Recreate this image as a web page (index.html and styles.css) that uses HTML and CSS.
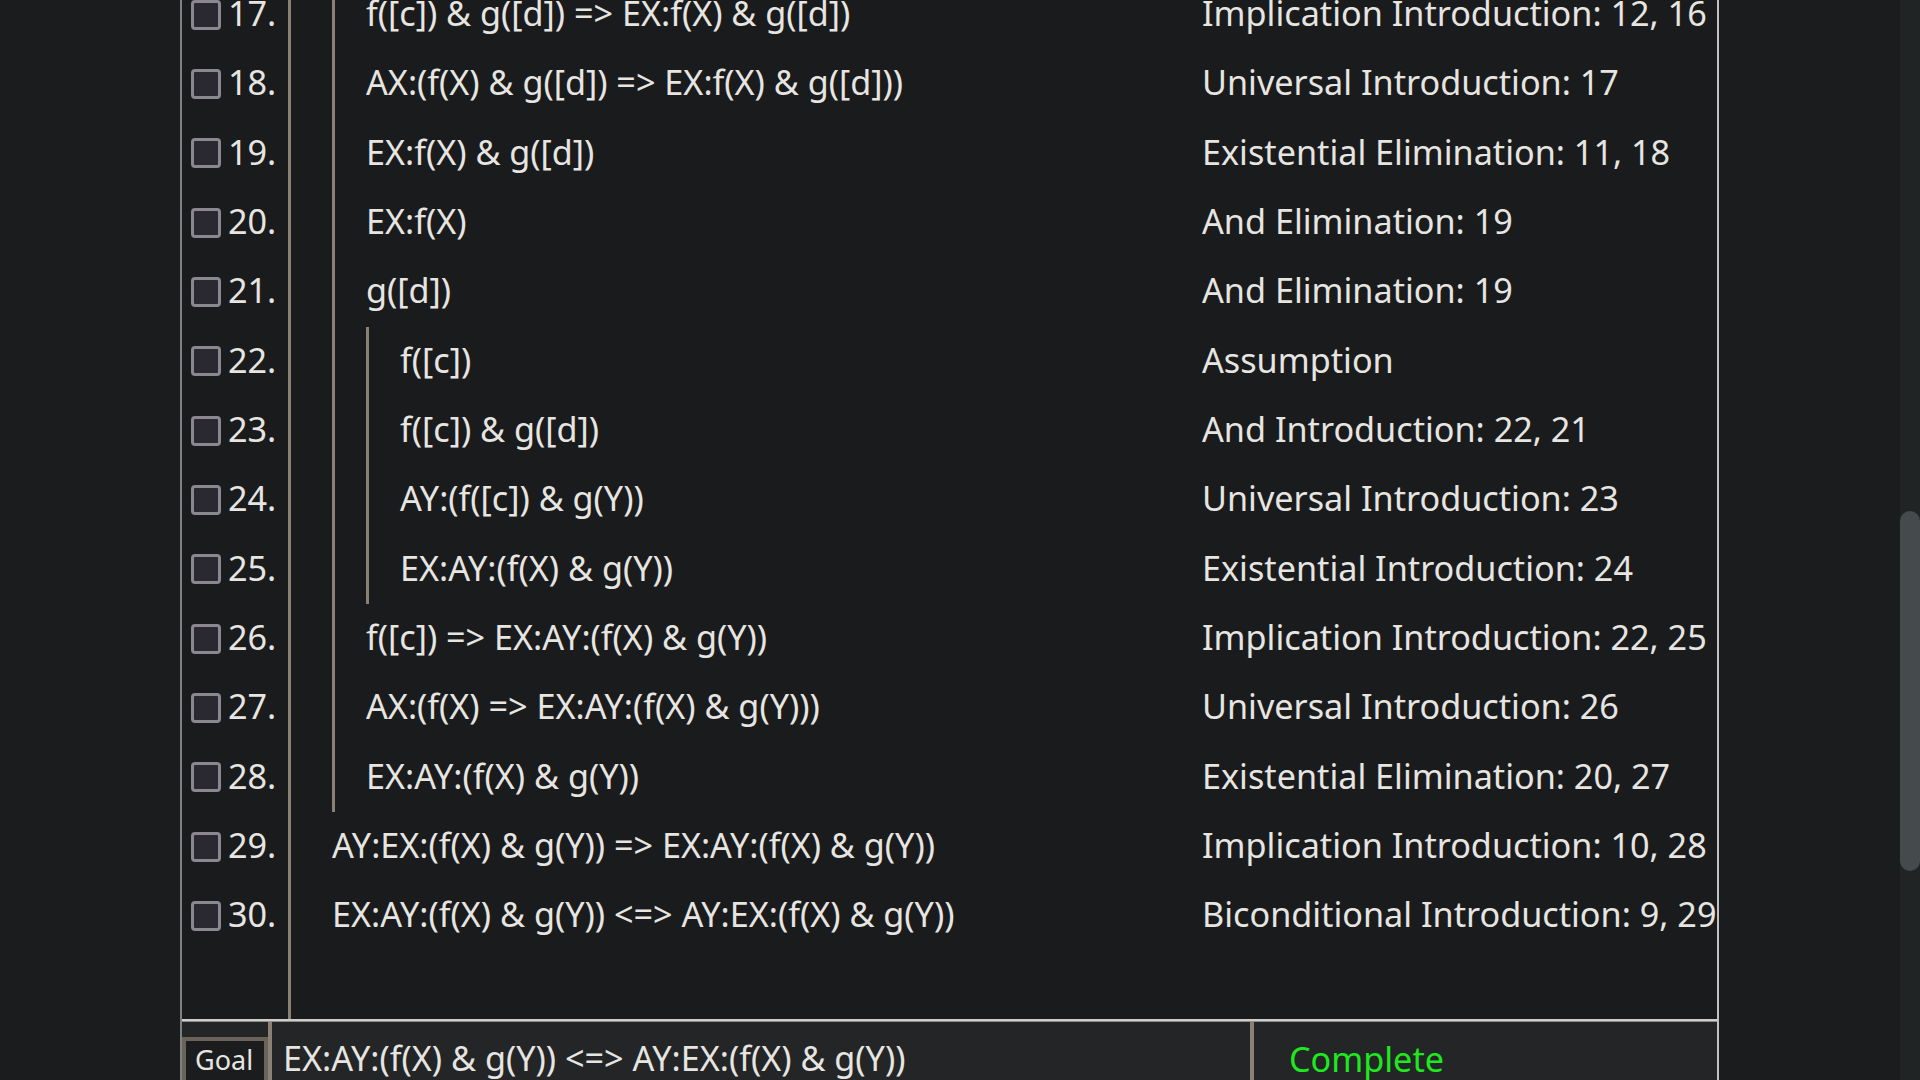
FILE: index.html
```html
<!DOCTYPE html>
<html>
<head>
<meta charset="utf-8">
<link rel="stylesheet" href="styles.css">
</head>
<body>
<div class="gutter"></div>
<div class="panel">
  <div class="proof">
    <div class="rows">
      <div class="row"><div class="num"><span class="box"></span><span class="lbl">17.</span></div><div class="formula"><div class="bar"></div><span class="txt">f([c]) &amp; g([d]) =&gt; EX:f(X) &amp; g([d])</span></div><div class="reason"><span class="txt">Implication Introduction: 12, 16</span></div></div>
      <div class="row"><div class="num"><span class="box"></span><span class="lbl">18.</span></div><div class="formula"><div class="bar"></div><span class="txt">AX:(f(X) &amp; g([d]) =&gt; EX:f(X) &amp; g([d]))</span></div><div class="reason"><span class="txt">Universal Introduction: 17</span></div></div>
      <div class="row"><div class="num"><span class="box"></span><span class="lbl">19.</span></div><div class="formula"><div class="bar"></div><span class="txt">EX:f(X) &amp; g([d])</span></div><div class="reason"><span class="txt">Existential Elimination: 11, 18</span></div></div>
      <div class="row"><div class="num"><span class="box"></span><span class="lbl">20.</span></div><div class="formula"><div class="bar"></div><span class="txt">EX:f(X)</span></div><div class="reason"><span class="txt">And Elimination: 19</span></div></div>
      <div class="row"><div class="num"><span class="box"></span><span class="lbl">21.</span></div><div class="formula"><div class="bar"></div><span class="txt">g([d])</span></div><div class="reason"><span class="txt">And Elimination: 19</span></div></div>
      <div class="row"><div class="num"><span class="box"></span><span class="lbl">22.</span></div><div class="formula"><div class="bar"></div><div class="bar"></div><span class="txt">f([c])</span></div><div class="reason"><span class="txt">Assumption</span></div></div>
      <div class="row"><div class="num"><span class="box"></span><span class="lbl">23.</span></div><div class="formula"><div class="bar"></div><div class="bar"></div><span class="txt">f([c]) &amp; g([d])</span></div><div class="reason"><span class="txt">And Introduction: 22, 21</span></div></div>
      <div class="row"><div class="num"><span class="box"></span><span class="lbl">24.</span></div><div class="formula"><div class="bar"></div><div class="bar"></div><span class="txt">AY:(f([c]) &amp; g(Y))</span></div><div class="reason"><span class="txt">Universal Introduction: 23</span></div></div>
      <div class="row"><div class="num"><span class="box"></span><span class="lbl">25.</span></div><div class="formula"><div class="bar"></div><div class="bar"></div><span class="txt">EX:AY:(f(X) &amp; g(Y))</span></div><div class="reason"><span class="txt">Existential Introduction: 24</span></div></div>
      <div class="row"><div class="num"><span class="box"></span><span class="lbl">26.</span></div><div class="formula"><div class="bar"></div><span class="txt">f([c]) =&gt; EX:AY:(f(X) &amp; g(Y))</span></div><div class="reason"><span class="txt">Implication Introduction: 22, 25</span></div></div>
      <div class="row"><div class="num"><span class="box"></span><span class="lbl">27.</span></div><div class="formula"><div class="bar"></div><span class="txt">AX:(f(X) =&gt; EX:AY:(f(X) &amp; g(Y)))</span></div><div class="reason"><span class="txt">Universal Introduction: 26</span></div></div>
      <div class="row"><div class="num"><span class="box"></span><span class="lbl">28.</span></div><div class="formula"><div class="bar"></div><span class="txt">EX:AY:(f(X) &amp; g(Y))</span></div><div class="reason"><span class="txt">Existential Elimination: 20, 27</span></div></div>
      <div class="row"><div class="num"><span class="box"></span><span class="lbl">29.</span></div><div class="formula"><span class="txt">AY:EX:(f(X) &amp; g(Y)) =&gt; EX:AY:(f(X) &amp; g(Y))</span></div><div class="reason"><span class="txt">Implication Introduction: 10, 28</span></div></div>
      <div class="row"><div class="num"><span class="box"></span><span class="lbl">30.</span></div><div class="formula"><span class="txt">EX:AY:(f(X) &amp; g(Y)) &lt;=&gt; AY:EX:(f(X) &amp; g(Y))</span></div><div class="reason"><span class="txt">Biconditional Introduction: 9, 29</span></div></div>
      <div class="row filler"><div class="num"></div></div>
    </div>
  </div>
  <div class="sep"></div>
  <div class="bottom">
    <div class="goal-cell"><div class="goal-btn">Goal</div></div>
    <div class="goal-text">EX:AY:(f(X) &amp; g(Y)) &lt;=&gt; AY:EX:(f(X) &amp; g(Y))</div>
    <div class="status">Complete</div>
  </div>
</div>
<div class="space"></div>
<div class="scrollbar"><div class="thumb"></div></div>
</body>
</html>
```

FILE: styles.css
```css
html, body {
  margin: 0;
  padding: 0;
}
body {
  width: 1920px;
  height: 1080px;
  overflow: hidden;
  background: #1b1c1e;
  display: flex;
  font-family: "Noto Sans", "Open Sans", sans-serif;
  color: #e7e5e1;
}
.gutter {
  width: 180px;
  flex: none;
}
.panel {
  width: 1539px;
  flex: none;
  box-sizing: border-box;
  border-left: 2px solid #7f8082;
  border-right: 2px solid #c2c2c2;
  display: flex;
  flex-direction: column;
  height: 1080px;
  background: #1a1b1d;
}
.space {
  flex: 1;
}
.scrollbar {
  width: 20px;
  flex: none;
  background: #212425;
  display: flex;
  flex-direction: column;
}
.thumb {
  margin-top: 511px;
  height: 360px;
  background: #454a4c;
  border-radius: 10px;
}
.proof {
  height: 1019px;
  flex: none;
  overflow: hidden;
}
.rows {
  display: flex;
  flex-direction: column;
  height: 1039px;
  margin-top: -20px;
}
.row {
  height: 69.33px;
  flex: none;
  display: flex;
  font-size: 34.2px;
  white-space: nowrap;
}
.row.filler {
  flex: 1;
}
.num {
  width: 106px;
  flex: none;
  border-right: 3px solid #8a8074;
  display: flex;
  align-items: center;
}
.box {
  width: 30px;
  height: 30px;
  box-sizing: border-box;
  border: 3px solid #8a8790;
  border-radius: 4px;
  background: #2a2831;
  margin-left: 9px;
  margin-right: 7px;
  flex: none;
}
.lbl, .txt {
  padding-bottom: 4px;
}
.formula {
  width: 911px;
  flex: none;
  box-sizing: border-box;
  padding-left: 41px;
  display: flex;
  align-items: center;
  align-self: stretch;
}
.bar {
  width: 34px;
  flex: none;
  box-sizing: border-box;
  border-left: 3px solid #8a8074;
  align-self: stretch;
}
.reason {
  flex: 1;
  display: flex;
  align-items: center;
  overflow: hidden;
}
.sep {
  height: 3px;
  flex: none;
  box-sizing: border-box;
  border-top: 2px solid #cfcdca;
  border-bottom: 1px solid #8e8e8e;
}
.bottom {
  flex: 1;
  display: flex;
  background: #232527;
  overflow: hidden;
  font-size: 34.2px;
  white-space: nowrap;
}
.goal-cell {
  width: 86px;
  flex: none;
  padding-top: 15px;
  border-right: 4px solid #8a8074;
}
.goal-btn {
  box-sizing: border-box;
  width: 86px;
  height: 60px;
  border: 4px solid #6a6359;
  background: #1b1c1e;
  font-size: 27px;
  padding-left: 9px;
  line-height: 37px;
}
.goal-text {
  width: 982px;
  flex: none;
  box-sizing: border-box;
  padding-left: 11px;
  padding-top: 12px;
  border-right: 4px solid #8a8074;
}
.status {
  flex: 1;
  padding-left: 35px;
  padding-top: 13px;
  color: #1fe81f;
}
```
